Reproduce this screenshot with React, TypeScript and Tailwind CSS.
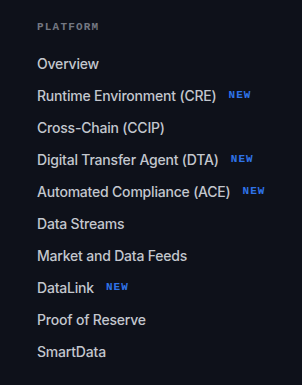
const items: { label: string; isNew?: boolean }[] = [
  { label: "Overview" },
  { label: "Runtime Environment (CRE)", isNew: true },
  { label: "Cross-Chain (CCIP)" },
  { label: "Digital Transfer Agent (DTA)", isNew: true },
  { label: "Automated Compliance (ACE)", isNew: true },
  { label: "Data Streams" },
  { label: "Market and Data Feeds" },
  { label: "DataLink", isNew: true },
  { label: "Proof of Reserve" },
  { label: "SmartData" },
];

export default function App() {
  return (
    <div className="w-[302px] h-[385px] bg-[#0e111a] pl-[37px] pt-[20px] font-['Inter',sans-serif]">
      <div className="h-[14px] flex items-center font-['Liberation_Mono',monospace] font-bold text-[11px] tracking-[1.2px] text-[#737781]">
        PLATFORM
      </div>
      <ul className="mt-[13px] flex flex-col">
        {items.map((item) => (
          <li
            key={item.label}
            className="h-[32px] flex items-center text-[14px] font-medium tracking-[-0.2px] text-[#c3c7ce]"
          >
            <span>{item.label}</span>
            {item.isNew && (
              <span className="ml-[12px] font-['Liberation_Mono',monospace] font-bold text-[11px] tracking-[1px] text-[#2f73e8]">
                NEW
              </span>
            )}
          </li>
        ))}
      </ul>
    </div>
  );
}
